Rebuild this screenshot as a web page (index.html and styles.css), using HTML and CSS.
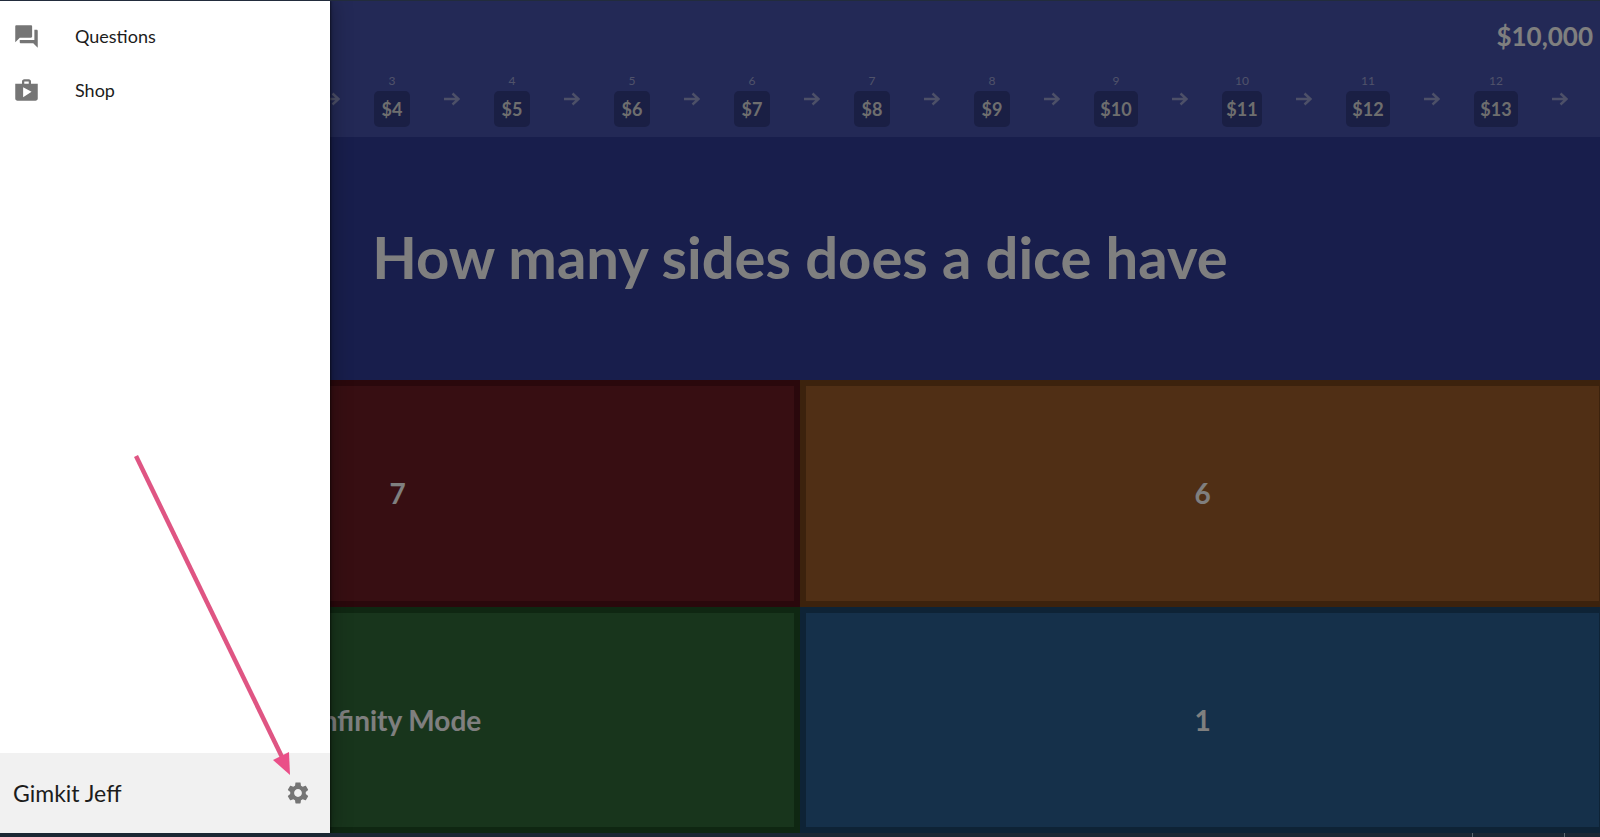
FILE: index.html
```html
<!DOCTYPE html>
<html lang="en">
<head>
<meta charset="utf-8">
<title>Gimkit</title>
<link rel="stylesheet" href="styles.css">
</head>
<body>
<svg class="defs" aria-hidden="true">
  <symbol id="arrow" viewBox="0 0 16 14"><path d="M0 7H14M8.500 1.500L14.500 7L8.500 12.500" fill="none" stroke="currentColor" stroke-width="2.400"/></symbol>
</svg>
<div class="app">
  <main class="game">
    <header class="topbar">
      <div class="balance">$10,000</div>
      <div class="steps">
        <svg class="arrow"><use href="#arrow"/></svg>
        <div class="step"><span class="level">3</span><span class="amount">$4</span></div>
        <svg class="arrow"><use href="#arrow"/></svg>
        <div class="step"><span class="level">4</span><span class="amount">$5</span></div>
        <svg class="arrow"><use href="#arrow"/></svg>
        <div class="step"><span class="level">5</span><span class="amount">$6</span></div>
        <svg class="arrow"><use href="#arrow"/></svg>
        <div class="step"><span class="level">6</span><span class="amount">$7</span></div>
        <svg class="arrow"><use href="#arrow"/></svg>
        <div class="step"><span class="level">7</span><span class="amount">$8</span></div>
        <svg class="arrow"><use href="#arrow"/></svg>
        <div class="step"><span class="level">8</span><span class="amount">$9</span></div>
        <svg class="arrow"><use href="#arrow"/></svg>
        <div class="step wide"><span class="level">9</span><span class="amount">$10</span></div>
        <svg class="arrow"><use href="#arrow"/></svg>
        <div class="step medium"><span class="level">10</span><span class="amount">$11</span></div>
        <svg class="arrow"><use href="#arrow"/></svg>
        <div class="step wide"><span class="level">11</span><span class="amount">$12</span></div>
        <svg class="arrow"><use href="#arrow"/></svg>
        <div class="step wide"><span class="level">12</span><span class="amount">$13</span></div>
        <svg class="arrow"><use href="#arrow"/></svg>
      </div>
    </header>
    <h1 class="question">How many sides does a dice have</h1>
    <div class="answers">
      <button class="answer red" type="button">7</button>
      <button class="answer orange" type="button">6</button>
      <button class="answer green" type="button">Infinity Mode</button>
      <button class="answer blue" type="button">1</button>
    </div>
  </main>
  <div class="backdrop"></div>
  <aside class="drawer">
    <nav class="menu">
      <button class="item" type="button">
        <svg class="icon" viewBox="0 0 24 24"><path d="M21 6h-2v9H6v2c0 .55.45 1 1 1h11l4 4V7c0-.55-.45-1-1-1zm-4 6V3c0-.55-.45-1-1-1H3c-.55 0-1 .45-1 1v14l4-4h10c.55 0 1-.45 1-1z"/></svg>
        Questions
      </button>
      <button class="item" type="button">
        <svg class="icon" viewBox="0 0 24 24"><path d="M16 6V4c0-1.110-.89-2-2-2h-4c-1.110 0-2 .89-2 2v2H2v13c0 1.110.89 2 2 2h16c1.110 0 2-.89 2-2V6h-6zm-6-2h4v2h-4V4zM9 18V9l7.500 4L9 18z"/></svg>
        Shop
      </button>
    </nav>
    <footer class="account">
      <span>Gimkit Jeff</span>
      <button class="settings" type="button" aria-label="Settings">
        <svg class="icon" viewBox="0 0 24 24"><path d="M19.140 12.940c.04-.3.060-.61.060-.94 0-.32-.02-.64-.07-.94l2.030-1.580c.18-.14.230-.41.120-.61l-1.920-3.320c-.12-.22-.37-.29-.59-.22l-2.390.96c-.5-.38-1.030-.7-1.620-.94l-.36-2.540c-.04-.24-.24-.41-.48-.41h-3.840c-.24 0-.43.170-.47.410l-.36 2.540c-.59.240-1.130.570-1.620.94l-2.390-.96c-.22-.08-.47 0-.59.220L2.740 8.870c-.12.210-.08.470.120.610l2.030 1.580c-.05.3-.09.630-.09.94s.02.640.070.94l-2.030 1.580c-.18.140-.23.410-.12.610l1.920 3.320c.12.220.37.290.59.220l2.390-.96c.5.380 1.030.7 1.620.94l.36 2.540c.05.240.240.410.480.410h3.840c.24 0 .44-.17.470-.41l.36-2.540c.59-.24 1.130-.56 1.620-.94l2.390.96c.22.080.470 0 .59-.22l1.920-3.320c.12-.22.070-.47-.12-.61l-2.010-1.580zM12 15.600c-1.980 0-3.600-1.620-3.600-3.600s1.620-3.600 3.600-3.600 3.600 1.620 3.600 3.600-1.620 3.600-3.600 3.600z"/></svg>
      </button>
    </footer>
    <svg class="pointer" viewBox="0 0 160 322" aria-hidden="true"><path d="M2 2L148 303" fill="none" stroke="#df5583" stroke-width="4.500"/><path d="M156 321L139 306L155 298Z" fill="#ea4f88"/></svg>
  </aside>
</div>
<div class="taskbar"><i></i><i></i></div>
</body>
</html>
```
FILE: styles.css
```css
* { box-sizing: border-box; }
body {
  margin: 0;
  height: 100vh;
  display: flex;
  flex-direction: column;
  overflow: hidden;
  border-top: 1px solid #222c3c;
  background: #1b2733;
  font-family: Lato, "Liberation Sans", sans-serif;
}
button { border: 0; margin: 0; padding: 0; background: none; font: inherit; color: inherit; }
.defs { position: absolute; width: 0; height: 0; }
.app { position: relative; flex: 1; min-height: 0; overflow: hidden; }
.game { height: 100%; display: flex; flex-direction: column; color: #fff; }

.topbar { height: 136px; padding-top: 16px; background: #4652ac; }
.balance { padding-right: 7px; text-align: right; font-size: 26px; line-height: 38px; font-weight: 700; }
.steps { display: flex; align-items: center; gap: 34px; margin-top: 19px; padding-left: 324px; }
.step { flex: none; width: 36px; display: flex; flex-direction: column; align-items: stretch; text-align: center; }
.step.medium { width: 40px; }
.step.wide { width: 44px; }
.level { font-size: 12px; line-height: 14px; color: #a0a5d4; }
.amount { margin-top: 3px; border-radius: 5px; background: #353e88; font-size: 18px; line-height: 36px; font-weight: 700; color: #ddd; }
.arrow { flex: none; width: 16px; height: 14px; margin-bottom: 4px; color: #9ba0d0; }

.question {
  flex: none;
  height: 243px;
  margin: 0;
  padding-bottom: 4px;
  display: flex;
  align-items: center;
  justify-content: center;
  background: #303c98;
  font-size: 58px;
  font-weight: 700;
}
.answers { flex: 1; display: grid; grid-template-columns: 1fr 1fr; grid-template-rows: 1fr 1fr; margin: 0 -5px; }
.answer { border: 6px solid; font-size: 28px; font-weight: 700; color: #fff; }
.red { background: #6e1c24; border-color: #541018; }
.orange { background: #a05e2a; border-color: #78441a; }
.green { background: #306a38; border-color: #1e4e24; }
.blue { background: #2a6094; border-color: #1c466c; }

.backdrop { position: absolute; inset: 0; background: rgba(0, 0, 0, .5); }
.drawer {
  position: absolute;
  inset: 0 auto 0 0;
  width: 330px;
  display: flex;
  flex-direction: column;
  justify-content: space-between;
  background: #fff;
  box-shadow: 0 0 20px rgba(0, 0, 0, .4), 1px 0 2px rgba(0, 0, 0, .5);
  color: #1c1c1c;
}
.menu { padding-top: 8px; }
.item { display: flex; align-items: center; gap: 35px; width: 100%; height: 54px; padding-left: 13px; font-size: 18px; }
.icon { width: 27px; height: 27px; fill: #757575; }
.account { display: flex; align-items: center; justify-content: space-between; height: 80px; padding: 0 19px 0 13px; background: #f1f1f1; font-size: 23px; }
.settings { display: flex; }
.settings .icon { width: 26px; height: 26px; }
.pointer { position: absolute; left: 134px; bottom: 57px; width: 160px; height: 322px; }

.taskbar { flex: none; display: flex; justify-content: flex-end; gap: 91px; height: 4px; padding-right: 35px; }
.taskbar i { width: 1px; height: 4px; background: #5d6870; }
```
